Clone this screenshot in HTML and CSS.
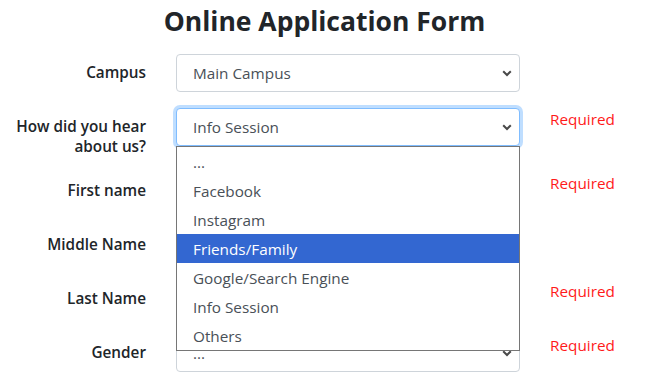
FILE: index.html
```html
<!DOCTYPE html>
<html lang="en">
<head>
    <meta charset="UTF-8">
    <meta name="viewport" content="width=device-width, initial-scale=1.0">
    <title>Online Application Form</title>
    <link rel="stylesheet" href="styles.css">
</head>
<body>
    <h1 class="page-title">Online Application Form</h1>

    <form class="apply-form">
        <div class="form-row">
            <label class="form-label">Campus</label>
            <div class="select-box">
                <span>Main Campus</span>
                <svg class="chevron" width="10" height="7" viewBox="0 0 10 7"><path d="M1.2 1.2 5 5 8.8 1.2" fill="none" stroke="#4a4a4a" stroke-width="2"/></svg>
            </div>
            <span class="required"></span>
        </div>

        <div class="form-row">
            <label class="form-label">How did you hear about us?</label>
            <div class="select-wrap">
                <div class="select-box focused">
                    <span>Info Session</span>
                    <svg class="chevron" width="10" height="7" viewBox="0 0 10 7"><path d="M1.2 1.2 5 5 8.8 1.2" fill="none" stroke="#4a4a4a" stroke-width="2"/></svg>
                </div>
                <!-- open dropdown list -->
                <ul class="dropdown">
                    <li>...</li>
                    <li>Facebook</li>
                    <li>Instagram</li>
                    <li class="active">Friends/Family</li>
                    <li>Google/Search Engine</li>
                    <li>Info Session</li>
                    <li>Others</li>
                </ul>
            </div>
            <span class="required">Required</span>
        </div>

        <div class="form-row">
            <label class="form-label">First name</label>
            <div class="text-box"></div>
            <span class="required">Required</span>
        </div>

        <div class="form-row">
            <label class="form-label">Middle Name</label>
            <div class="text-box"></div>
            <span class="required"></span>
        </div>

        <div class="form-row">
            <label class="form-label">Last Name</label>
            <div class="text-box"></div>
            <span class="required">Required</span>
        </div>

        <div class="form-row">
            <label class="form-label">Gender</label>
            <div class="select-box">
                <span>...</span>
                <svg class="chevron" width="10" height="7" viewBox="0 0 10 7"><path d="M1.2 1.2 5 5 8.8 1.2" fill="none" stroke="#4a4a4a" stroke-width="2"/></svg>
            </div>
            <span class="required">Required</span>
        </div>
    </form>
</body>
</html>
```

FILE: styles.css
```css
* {
    margin: 0;
    padding: 0;
    box-sizing: border-box;
}

body {
    font-family: "Open Sans", "Noto Sans", sans-serif;
    font-size: 15.3px;
    color: #212529;
    background: white;
    overflow: hidden;
}

.page-title {
    text-align: center;
    font-size: 26.5px;
    font-weight: bold;
    line-height: 34px;
    padding-top: 4px;
    margin-bottom: 16px;
}

.form-row {
    display: grid;
    grid-template-columns: 146px 344px auto;
    column-gap: 30px;
    align-items: start;
    margin-bottom: 16px;
}

.form-label {
    text-align: right;
    font-weight: 600;
    line-height: 20px;
    padding-top: 8px;
}

.select-wrap {
    position: relative;
}

.select-box,
.text-box {
    height: 38px;
    border: 1px solid #ced4da;
    border-radius: 4px;
    background: white;
}

.select-box {
    display: flex;
    align-items: center;
    justify-content: space-between;
    padding: 0 7px 0 16px;
    color: #495057;
}

.select-box.focused {
    border-color: #80bdff;
    box-shadow: 0 0 0 3px rgba(0,123,255,0.25);
}

.required {
    color: #ff1a1a;
    line-height: 22px;
}

.dropdown {
    position: absolute;
    top: 100%;
    left: 0;
    width: 100%;
    list-style: none;
    background: white;
    border: 1px solid #767676;
    z-index: 10;
}

.dropdown li {
    height: 29px;
    line-height: 30px;
    padding-left: 16px;
    color: #495057;
}

.dropdown li.active {
    background: #3367d1;
    color: white;
}
```
